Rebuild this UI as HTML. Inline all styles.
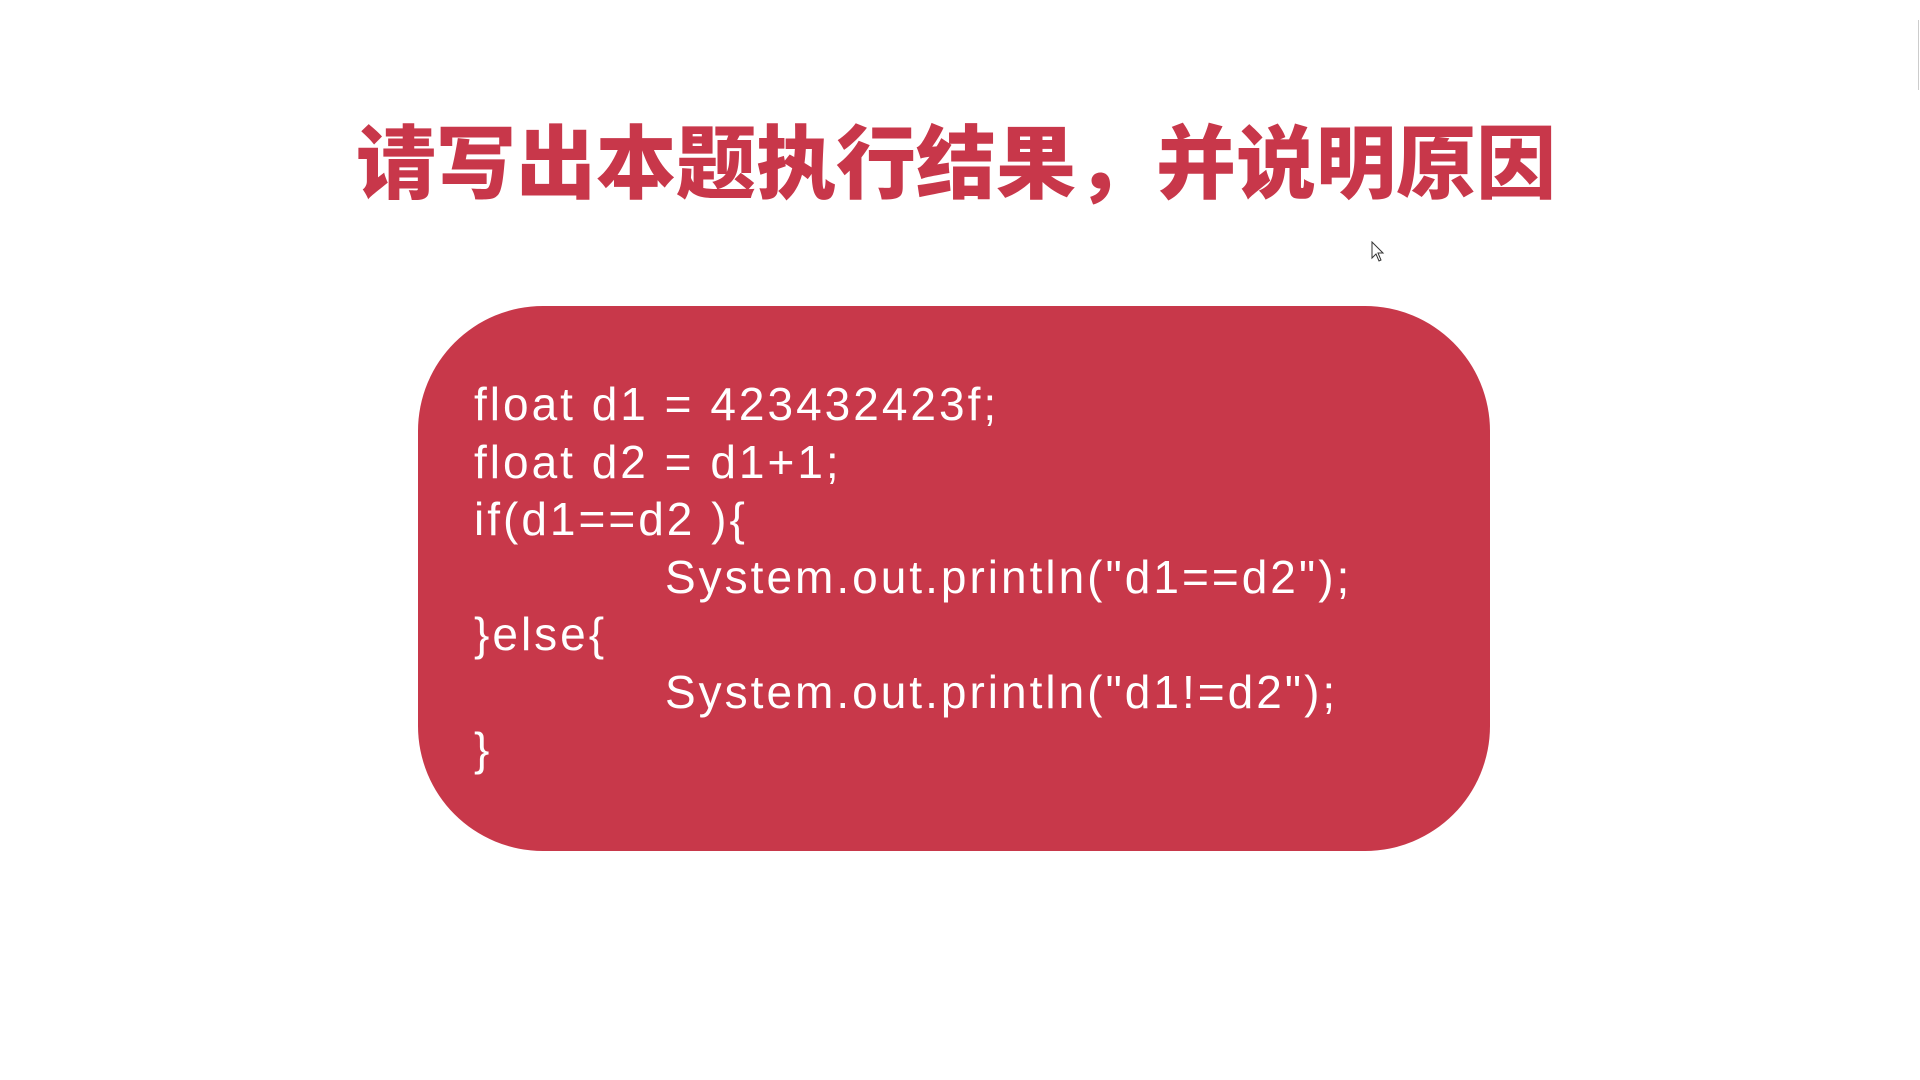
<!DOCTYPE html>
<html><head><meta charset="utf-8"><style>
html,body{margin:0;padding:0;background:#fff;width:1920px;height:1080px;overflow:hidden;position:relative}
.title{position:absolute;left:356px;top:115px;width:1200px;font-family:"Liberation Sans","Noto Sans CJK SC",sans-serif;font-weight:900;font-size:80px;line-height:100px;color:#c8374a;white-space:nowrap;letter-spacing:0px}
.box{position:absolute;left:418px;top:306px;width:1072px;height:545px;background:#c8384a;border-radius:125px}
.code{position:absolute;left:474px;font-family:"Liberation Sans",sans-serif;font-size:46px;color:#fff;white-space:pre;line-height:1;letter-spacing:3px}
</style></head><body>
<div class="title">请写出本题执行结果，并说明原因</div>
<div class="box"></div>
<div class="code" style="top:381px">float d1 = 423432423f;</div>
<div class="code" style="top:439px">float d2 = d1+1;</div>
<div class="code" style="top:496px">if(d1==d2 ){</div>
<div class="code" style="top:554px;left:665px">System.out.println("d1==d2");</div>
<div class="code" style="top:611px">}else{</div>
<div class="code" style="top:669px;left:665px">System.out.println("d1!=d2");</div>
<div class="code" style="top:726px">}</div>
<svg style="position:absolute;left:1371px;top:241px" width="14" height="22" viewBox="0 0 14 22"><path d="M1 1 L1 17 L5 13 L8 20 L10 19 L7 12 L12 12 Z" fill="#fff" stroke="#333" stroke-width="1"/></svg>
<div style="position:absolute;left:1918px;top:20px;width:1px;height:70px;background:#ccc"></div>
</body></html>
